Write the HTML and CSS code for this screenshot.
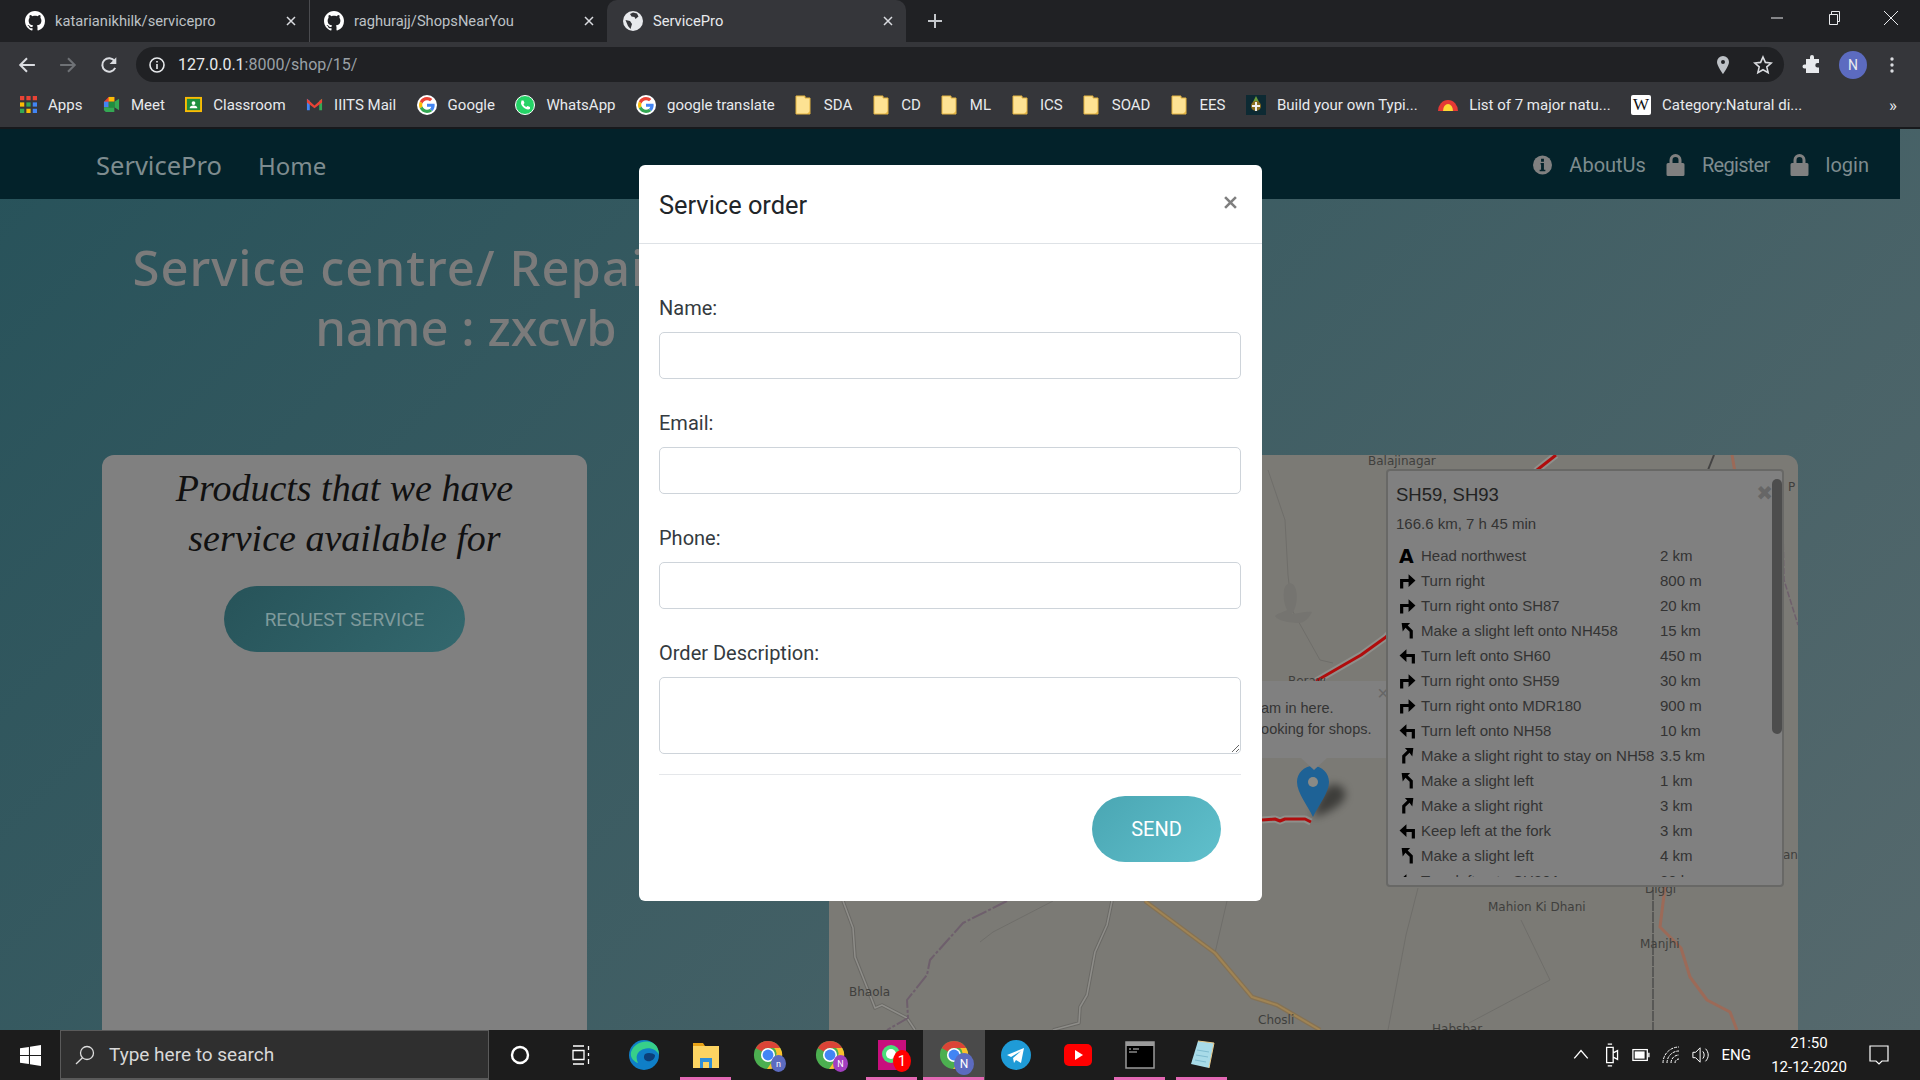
FILE: index.html
```html
<!DOCTYPE html>
<html lang="en">
<head>
<meta charset="utf-8">
<title>ServicePro</title>
<link rel="stylesheet" href="styles.css">
</head>
<body>
<svg class="defs" width="0" height="0" aria-hidden="true">
  <symbol id="gh" viewBox="0 0 16 16"><path fill="#fff" d="M8 0C3.58 0 0 3.58 0 8c0 3.54 2.29 6.53 5.47 7.59.4.07.55-.17.55-.38 0-.19-.01-.82-.01-1.49-2.01.37-2.53-.49-2.69-.94-.09-.23-.48-.94-.82-1.13-.28-.15-.68-.52-.01-.53.63-.01 1.08.58 1.23.82.72 1.21 1.87.87 2.33.66.07-.52.28-.87.51-1.07-1.78-.2-3.64-.89-3.64-3.95 0-.87.31-1.59.82-2.15-.08-.2-.36-1.02.08-2.12 0 0 .67-.21 2.2.82.64-.18 1.32-.27 2-.27.68 0 1.36.09 2 .27 1.53-1.04 2.2-.82 2.2-.82.44 1.1.16 1.92.08 2.12.51.56.82 1.27.82 2.15 0 3.07-1.87 3.75-3.65 3.95.29.25.54.73.54 1.48 0 1.07-.01 1.93-.01 2.2 0 .21.15.46.55.38A8.013 8.013 0 0016 8c0-4.42-3.58-8-8-8z"/></symbol>
  <symbol id="x" viewBox="0 0 10 10"><path d="M1 1l8 8M9 1L1 9" fill="none" stroke="currentColor" stroke-width="1.5"/></symbol>
  <symbol id="g" viewBox="-6 -6 60 60"><circle cx="24" cy="24" r="30" fill="#fff"/><path fill="#EA4335" d="M24 9.5c3.54 0 6.71 1.22 9.21 3.6l6.85-6.85C35.9 2.38 30.47 0 24 0 14.62 0 6.51 5.38 2.56 13.22l7.98 6.19C12.43 13.72 17.74 9.5 24 9.5z"/><path fill="#4285F4" d="M46.98 24.55c0-1.57-.15-3.09-.38-4.55H24v9.02h12.94c-.58 2.96-2.26 5.48-4.78 7.18l7.73 6c4.51-4.18 7.09-10.36 7.09-17.65z"/><path fill="#FBBC05" d="M10.53 28.59c-.48-1.45-.76-2.99-.76-4.59s.27-3.14.76-4.59l-7.98-6.19C.92 16.46 0 20.12 0 24c0 3.88.92 7.54 2.56 10.78l7.97-6.19z"/><path fill="#34A853" d="M24 48c6.48 0 11.93-2.13 15.89-5.81l-7.73-6c-2.15 1.45-4.92 2.3-8.16 2.3-6.26 0-11.57-4.22-13.47-9.91l-7.98 6.19C6.51 42.62 14.62 48 24 48z"/></symbol>
  <symbol id="folder" viewBox="0 0 16 20"><path fill="#fde293" stroke="#e3b341" d="M1 1h9v2h5v16H1z"/><path fill="#e3b341" d="M12 19l3-3v3z"/></symbol>
  <symbol id="chrome" viewBox="0 0 32 32"><circle cx="16" cy="16" r="15" fill="#4caf50"/><path fill="#db4437" d="M3 8.5A15 15 0 0 1 29 8.5H16a7.500 7.500 0 0 0-6.500 3.800z"/><path fill="#fbc02d" d="M29 8.500A15 15 0 0 1 15 31l7.500-11a7.500 7.500 0 0 0 0-11.500z"/><circle cx="16" cy="16" r="7.500" fill="#fff"/><circle cx="16" cy="16" r="5.800" fill="#4285f4"/></symbol>
  <symbol id="tr" viewBox="0 0 16 16"><path d="M1 15.500V6.500h8V2l6.500 6L9 14V9.500H4v6z"/></symbol>
  <symbol id="tl" viewBox="0 0 16 16"><path d="M15 15.500V6.500H7V2L.5 8 7 14V9.500h5v6z"/></symbol>
  <symbol id="sl" viewBox="0 0 16 16"><path d="M2.500 1h8L8.200 3.300 13 8v7.500h-3V9.200L6.100 5.400 3.500 9z"/></symbol>
  <symbol id="sr" viewBox="0 0 16 16"><path d="M13.500 1h-8l2.300 2.300L3 8v7.500h3V9.200l3.900-3.800L12.500 9z"/></symbol>
  <symbol id="lock" viewBox="0 0 18 22"><path fill="#808080" d="M1.500 9H3V6a6 6 0 0 1 12 0v3h1.500A1.500 1.500 0 0 1 18 10.500v10a1.500 1.500 0 0 1-1.500 1.500h-15A1.500 1.500 0 0 1 0 20.500v-10A1.500 1.500 0 0 1 1.500 9zM6 9h6V6a3 3 0 0 0-6 0z"/></symbol>
</svg>

<div class="tabbar">
  <div class="tab"><svg class="fav"><use href="#gh"/></svg><span class="tab-title">katarianikhilk/servicepro</span><svg class="tab-x"><use href="#x"/></svg></div>
  <div class="tab tab-sep"><svg class="fav"><use href="#gh"/></svg><span class="tab-title">raghurajj/ShopsNearYou</span><svg class="tab-x"><use href="#x"/></svg></div>
  <div class="tab tab-active"><svg class="fav" viewBox="0 0 20 20"><circle cx="10" cy="10" r="10" fill="#e8eaed"/><path fill="#35363a" d="M10 1.500l4 1 1.500 3-3 2.500-1-2-3-.5L7 3zM2.500 9l4.500 1 2 3-1.500 5L5 15z"/></svg><span class="tab-title">ServicePro</span><svg class="tab-x"><use href="#x"/></svg></div>
  <svg class="newtab" viewBox="0 0 14 14"><path d="M7 0v14M0 7h14" stroke="#c4c7cb" stroke-width="2"/></svg>
  <div class="winctl">
    <svg viewBox="0 0 14 14"><path d="M1 7h12" stroke="#e8eaed"/></svg>
    <svg viewBox="0 0 14 14"><path d="M2.500 3.500h8v10h-8zM4.500 3.500V.5h8v10h-2" fill="none" stroke="#e8eaed"/></svg>
    <svg viewBox="0 0 14 14"><path d="M0 0l14 14M14 0L0 14" stroke="#e8eaed"/></svg>
  </div>
</div>

<div class="toolbar">
  <svg class="tb-ic" viewBox="0 0 16 16"><path d="M15 8H2M8 2L2 8l6 6" fill="none" stroke="#dadce0" stroke-width="1.800"/></svg>
  <svg class="tb-ic" viewBox="0 0 16 16"><path d="M1 8h13M8 2l6 6-6 6" fill="none" stroke="#6f7276" stroke-width="1.800"/></svg>
  <svg class="tb-ic" viewBox="0 0 16 16"><path d="M13.500 10.500A6 6 0 1 1 13 4.500" fill="none" stroke="#dadce0" stroke-width="1.800"/><path d="M14.500 1v6h-6z" fill="#dadce0"/></svg>
  <div class="omnibox">
    <svg class="omni-info" viewBox="0 0 16 16"><circle cx="8" cy="8" r="7" fill="none" stroke="#e8eaed" stroke-width="1.600"/><path d="M7.200 7h1.600v5H7.200zM7.200 4h1.600v1.600H7.200z" fill="#e8eaed"/></svg>
    <span class="url"><b>127.0.0.1</b>:8000/shop/15/</span>
    <svg class="omni-pin" viewBox="0 0 12 18"><path d="M6 0a6 6 0 0 0-6 6c0 4 6 12 6 12s6-8 6-12a6 6 0 0 0-6-6zm0 8a2 2 0 1 1 0-4 2 2 0 0 1 0 4z" fill="#bdc1c6"/></svg>
    <svg class="omni-star" viewBox="0 0 20 20"><path d="M10 2l2.400 5.400 5.800.6-4.400 3.900 1.300 5.800L10 14.700 4.900 17.700l1.300-5.800L1.800 8l5.800-.6z" fill="none" stroke="#dadce0" stroke-width="1.600"/></svg>
  </div>
  <svg class="puzzle" viewBox="0 0 20 20"><path fill="#e8eaed" d="M8 2a2 2 0 0 1 4 0v2h5v4h-1.500a2.200 2.200 0 0 0 0 4.400H17V18H4v-4.500H2.500a2 2 0 0 1 0-4H4V4h4z"/></svg>
  <div class="avatar">N</div>
  <svg class="dots" viewBox="0 0 4 16"><circle cx="2" cy="2" r="1.700" fill="#dadce0"/><circle cx="2" cy="8" r="1.700" fill="#dadce0"/><circle cx="2" cy="14" r="1.700" fill="#dadce0"/></svg>
</div>

<div class="bookmarks">
  <a class="bm"><svg class="bm-ic" viewBox="0 0 16 16"><rect width="4" height="4" fill="#ea4335"/><rect x="6" width="4" height="4" fill="#ea4335"/><rect x="12" width="4" height="4" fill="#ea4335"/><rect y="6" width="4" height="4" fill="#fbbc05"/><rect x="6" y="6" width="4" height="4" fill="#34a853"/><rect x="12" y="6" width="4" height="4" fill="#4285f4"/><rect y="12" width="4" height="4" fill="#34a853"/><rect x="6" y="12" width="4" height="4" fill="#fbbc05"/><rect x="12" y="12" width="4" height="4" fill="#4285f4"/></svg>Apps</a>
  <a class="bm"><svg class="bm-ic" viewBox="0 0 18 18"><path d="M1 6l5-5h6v5H6v6H1z" fill="#ea4335"/><path d="M1 6h5v6H1z" fill="#4285f4"/><path d="M6 12h6v5H3l-2-2v-3z" fill="#34a853"/><path d="M6 1h6v5H6z" fill="#fbbc05"/><path d="M12 6v6l5 3V3z" fill="#34a853"/><path d="M6 6h6v6H6z" fill="#1e8e3e"/></svg>Meet</a>
  <a class="bm"><svg class="bm-ic" viewBox="0 0 18 18"><rect x="0" y="1" width="18" height="16" fill="#fbbc04"/><rect x="2" y="3" width="14" height="12" fill="#1e8e3e"/><circle cx="9" cy="7.500" r="2" fill="#fff"/><path d="M5 13a4 3 0 0 1 8 0z" fill="#fff"/></svg>Classroom</a>
  <a class="bm"><svg class="bm-ic" viewBox="0 0 18 18"><path d="M1 3l3 2v10H1z" fill="#4285f4"/><path d="M17 3l-3 2v10h3z" fill="#34a853"/><path d="M1 3l8 7 8-7v4l-8 6-8-6z" fill="#ea4335"/></svg>IIITS Mail</a>
  <a class="bm"><svg class="bm-ic bm-lg"><use href="#g"/></svg>Google</a>
  <a class="bm"><svg class="bm-ic bm-lg" viewBox="0 0 20 20"><circle cx="10" cy="10" r="9.500" fill="#25d366" stroke="#fff"/><path d="M6.500 5.500l2 0 1 2.500-1 1.200c.6 1.300 1.500 2.200 2.800 2.800l1.200-1 2.500 1v1.800c-1 1.200-3 1-5-.3-2-1.300-3.500-3-4-5 0-1.200.5-2.300.5-3z" fill="#fff"/></svg>WhatsApp</a>
  <a class="bm"><svg class="bm-ic bm-lg"><use href="#g"/></svg>google translate</a>
  <a class="bm"><svg class="bm-fold"><use href="#folder"/></svg>SDA</a>
  <a class="bm"><svg class="bm-fold"><use href="#folder"/></svg>CD</a>
  <a class="bm"><svg class="bm-fold"><use href="#folder"/></svg>ML</a>
  <a class="bm"><svg class="bm-fold"><use href="#folder"/></svg>ICS</a>
  <a class="bm"><svg class="bm-fold"><use href="#folder"/></svg>SOAD</a>
  <a class="bm"><svg class="bm-fold"><use href="#folder"/></svg>EES</a>
  <a class="bm"><svg class="bm-ic bm-lg" viewBox="0 0 20 20"><rect width="20" height="20" fill="#0d2a33"/><path d="M10 1l3 6H7z" fill="#6a9a3a"/><circle cx="10" cy="11" r="5" fill="#8a6d1e"/><path d="M9 7h2v9H9zM6 10h8v2H6z" fill="#f0f0f0"/></svg>Build your own Typi...</a>
  <a class="bm"><svg class="bm-ic bm-lg" viewBox="0 0 20 20"><path d="M0 16a10 11 0 0 1 20 0z" fill="#e53935"/><path d="M5 16a5 7 0 0 1 10 0z" fill="#fdd835"/></svg>List of 7 major natu...</a>
  <a class="bm"><span class="bm-w">W</span>Category:Natural di...</a>
  <span class="bm-more">»</span>
</div>

<main class="page">
  <nav class="nav">
    <span class="brand">ServicePro</span>
    <a class="nav-home">Home</a>
    <div class="nav-right">
      <svg class="nav-ic" viewBox="0 0 20 20"><circle cx="10" cy="10" r="10" fill="#808080"/><path d="M8 8h3.500v7H13v1.500H7V15h1.500v-5.500H8zM8.500 3.500h3v3h-3z" fill="#03222a"/></svg><a class="nav-link">AboutUs</a>
      <svg class="nav-ic"><use href="#lock"/></svg><a class="nav-link nav-link-tight">Register</a>
      <svg class="nav-ic"><use href="#lock"/></svg><a class="nav-link">login</a>
    </div>
  </nav>

  <h1 class="hero"><span class="hero-line">Service centre/ Repair shop</span><br>name : zxcvb</h1>

  <section class="content">
    <div class="card">
      <h2 class="card-title">Products that we have service available for</h2>
      <a class="pill pill-req">REQUEST SERVICE</a>
    </div>

    <div class="map">
      <svg class="map-svg" viewBox="829 455 969 620">
        <g fill="none" stroke-linejoin="round">
          <path d="M843 901L853 928 855 957 870 995 875 1008 882 1005 907 1018 915 1030" stroke="#6a6965" stroke-width="3.500"/>
          <path d="M843 901L853 928 855 957 870 995 875 1008 882 1005 907 1018 915 1030" stroke="#8e8d89" stroke-width="1.500"/>
          <path d="M1112 901L1107 925 1095 952 1087 995 1080 1007 1079 1023 1053 1030" stroke="#6a6965" stroke-width="3.500"/>
          <path d="M1112 901L1107 925 1095 952 1087 995 1080 1007 1079 1023 1053 1030" stroke="#8e8d89" stroke-width="1.500"/>
          <path d="M1007 901L963 923 930 960 927 975 907 1000 908 1018 887 1030" stroke="#6e5f6c" stroke-width="2" stroke-dasharray="16 2 3 2"/>
          <path d="M1053 901L993 932 980 942M1227 901L1215 953M1418 888L1406 935 1388 1030M1521 920L1550 980 1469 1023" stroke="#6f6e6a" stroke-width="1"/>
          <path d="M1145 901L1215 953 1252 997 1277 1005 1320 1030" stroke="#857254" stroke-width="4.500"/>
          <path d="M1145 901L1215 953 1252 997 1277 1005 1320 1030" stroke="#a08454" stroke-width="2"/>
          <path d="M1665 887L1660 927 1681 948 1690 977 1707 1000 1730 1012 1737 1030" stroke="#9c6a58" stroke-width="3"/>
          <path d="M1653 890L1653 1030" stroke="#4e4e4c" stroke-width="1.500" stroke-dasharray="10 1"/>
          <path d="M1268 470L1285 520 1288 575 1292 610 1320 660 1333 663" stroke="#6f6e6a" stroke-width="1"/>
          <path d="M1782 480L1784 580 1798 625" stroke="#6e5f6c" stroke-width="1.500" stroke-dasharray="6 2"/>
          <path d="M1316 681L1361 655 1386 637 1430 590 1537 470 1556 455M1262 820L1275 819 1280 821 1285 819 1305 819 1311 822" stroke="#8f8f8b" stroke-width="7"/>
          <path d="M1316 681L1361 655 1386 637 1430 590 1537 470 1556 455M1262 820L1275 819 1280 821 1285 819 1305 819 1311 822" stroke="#b00c0c" stroke-width="3"/>
          <path d="M1714 455L1708 470" stroke="#444" stroke-width="2"/>
          <path d="M1732 455L1735 472" stroke="#9c6a58" stroke-width="3"/>
        </g>
        <path d="M1284 590c2-9 10-9 12 0s0 18-4 24c6 0 14-3 20-2-3 6-8 12-16 11s-18-2-21-7c3-3 9-4 12-6-3-6-4-13-3-20z" fill="#757470"/>
        <g class="map-label">
          <text x="1368" y="465">Balajinagar</text>
          <text x="1288" y="685">Beraw</text>
          <text x="1788" y="491">P</text>
          <text x="1783" y="859">an</text>
          <text x="1488" y="911">Mahion Ki Dhani</text>
          <text x="1640" y="948">Manjhi</text>
          <text x="1645" y="893">Diggi</text>
          <text x="849" y="996">Bhaola</text>
          <text x="1258" y="1024">Chosli</text>
          <text x="1432" y="1033">Habsbar</text>
        </g>
        <path class="pin-shadow" d="M1313 817c10-2 28-10 32-20 2-8-6-14-14-12-8 3-14 16-18 32z"/>
        <path d="M1313 817c-5-11-16-24-16-35 0-9 7-16 16-16s16 7 16 16c0 11-11 24-16 35z" fill="#1e6296"/>
        <circle cx="1313" cy="782" r="5" fill="#8a8a86"/>
        <path d="M1301 758h26l-13 12z" fill="#808080"/>
      </svg>
      <div class="popup">
        <span class="popup-x">×</span>
        <p>I am in here.</p>
        <p>Looking for shops.</p>
      </div>
      <aside class="panel">
        <div class="panel-scroll">
          <h3 class="panel-title">SH59, SH93</h3>
          <p class="panel-sum">166.6 km, 7 h 45 min</p>
          <div class="steps">
            <div class="step"><b class="step-a">A</b><span>Head northwest</span><span>2 km</span></div>
            <div class="step"><svg class="step-ic"><use href="#tr"/></svg><span>Turn right</span><span>800 m</span></div>
            <div class="step"><svg class="step-ic"><use href="#tr"/></svg><span>Turn right onto SH87</span><span>20 km</span></div>
            <div class="step"><svg class="step-ic"><use href="#sl"/></svg><span>Make a slight left onto NH458</span><span>15 km</span></div>
            <div class="step"><svg class="step-ic"><use href="#tl"/></svg><span>Turn left onto SH60</span><span>450 m</span></div>
            <div class="step"><svg class="step-ic"><use href="#tr"/></svg><span>Turn right onto SH59</span><span>30 km</span></div>
            <div class="step"><svg class="step-ic"><use href="#tr"/></svg><span>Turn right onto MDR180</span><span>900 m</span></div>
            <div class="step"><svg class="step-ic"><use href="#tl"/></svg><span>Turn left onto NH58</span><span>10 km</span></div>
            <div class="step"><svg class="step-ic"><use href="#sr"/></svg><span>Make a slight right to stay on NH58</span><span>3.5 km</span></div>
            <div class="step"><svg class="step-ic"><use href="#sl"/></svg><span>Make a slight left</span><span>1 km</span></div>
            <div class="step"><svg class="step-ic"><use href="#sr"/></svg><span>Make a slight right</span><span>3 km</span></div>
            <div class="step"><svg class="step-ic"><use href="#tl"/></svg><span>Keep left at the fork</span><span>3 km</span></div>
            <div class="step"><svg class="step-ic"><use href="#sl"/></svg><span>Make a slight left</span><span>4 km</span></div>
            <div class="step"><svg class="step-ic"><use href="#tl"/></svg><span>Turn left onto SH30A</span><span>20 km</span></div>
          </div>
        </div>
        <span class="panel-x">✖</span>
        <span class="panel-thumb"></span>
      </aside>
    </div>
  </section>

  <div class="backdrop">
    <form class="modal">
      <header class="modal-head">
        <h2 class="modal-title">Service order</h2>
        <svg class="modal-x" viewBox="0 0 12 12"><path d="M1 1l10 10M11 1L1 11" stroke="#7f7f7f" stroke-width="2.400"/></svg>
      </header>
      <div class="modal-body">
        <label class="field"><span class="field-label">Name:</span><input class="control" type="text"></label>
        <label class="field"><span class="field-label">Email:</span><input class="control" type="text"></label>
        <label class="field"><span class="field-label">Phone:</span><input class="control" type="text"></label>
        <label class="field"><span class="field-label">Order Description:</span><textarea class="control control-area"></textarea></label>
      </div>
      <footer class="modal-foot"><a class="pill pill-send">SEND</a></footer>
    </form>
  </div>
</main>

<footer class="taskbar">
  <div class="tk-start"><svg viewBox="0 0 20 20"><path fill="#fff" d="M0 3l8.500-1.200v7.700H0zM9.500 1.600L20 0v9.500H9.500zM0 10.500h8.500v7.700L0 17zM9.500 10.500H20V20L9.500 18.400z"/></svg></div>
  <div class="tk-search"><svg viewBox="0 0 20 20"><circle cx="12" cy="8" r="6.500" fill="none" stroke="#ddd" stroke-width="1.300"/><path d="M7.500 12.800L1 19" stroke="#ddd" stroke-width="1.300"/></svg><span>Type here to search</span></div>
  <div class="tk-cell"><svg class="tk-sm" viewBox="0 0 20 20"><circle cx="10" cy="10" r="8" fill="none" stroke="#fff" stroke-width="2.400"/></svg></div>
  <div class="tk-cell"><svg class="tk-sm" viewBox="0 0 20 20"><path d="M1 1h11M1 19h11M1 5.500h11v9H1zM16.500 1v4M16.500 8v3M16.500 14v5" fill="none" stroke="#fff" stroke-width="1.300"/></svg></div>
  <div class="tk-cell"><svg class="tk-app" viewBox="0 0 30 30"><circle cx="15" cy="15" r="15" fill="#0f7fc7"/><path d="M2 12C5 3 16-1 24 3c5 3 6 8 6 12-2-5-9-8-15-6C8 11 6 17 9 23 4 21 1 17 2 12z" fill="#37cf8a"/><path d="M16 14c3-2 8-1 10 1 0 5-5 7-8 6s-4-4-2-7z" fill="#0c3f78"/></svg></div>
  <div class="tk-cell tk-open"><svg class="tk-app" viewBox="0 0 30 30"><path d="M2 3h10l2 3H2z" fill="#e8a317"/><path d="M2 6h26v22H2z" fill="#fcd462"/><path d="M9 18h12v10h-3v-6h-6v6H9z" fill="#2f8fd8"/></svg></div>
  <div class="tk-cell"><span class="tk-chrome"><svg class="tk-app"><use href="#chrome"/></svg><i class="tk-badge tk-b1">n</i></span></div>
  <div class="tk-cell"><span class="tk-chrome"><svg class="tk-app"><use href="#chrome"/></svg><i class="tk-badge tk-b2">N</i></span></div>
  <div class="tk-cell tk-open"><span class="tk-chrome"><svg class="tk-app" viewBox="0 0 30 30"><rect x="1" y="0" width="28" height="30" fill="#c80f7d"/><circle cx="14" cy="14" r="9" fill="#4be07a"/><circle cx="14" cy="14" r="5" fill="#fff"/></svg><i class="tk-count">1</i></span></div>
  <div class="tk-cell tk-open tk-active"><span class="tk-chrome"><svg class="tk-app"><use href="#chrome"/></svg><i class="tk-badge tk-b1 tk-big">N</i></span></div>
  <div class="tk-cell"><svg class="tk-app" viewBox="0 0 30 30"><circle cx="15" cy="15" r="15" fill="#1f9bd7"/><path d="M6 15L23 8l-3 15-5-3-2 3-1-5 8-7-10 6z" fill="#fff"/></svg></div>
  <div class="tk-cell"><svg class="tk-app" viewBox="0 0 30 30"><rect x="1" y="4" width="28" height="22" rx="5" fill="#f00"/><path d="M12 10l8 5-8 5z" fill="#fff"/></svg></div>
  <div class="tk-cell tk-open"><svg class="tk-app" viewBox="0 0 30 30"><rect x="1" y="2" width="28" height="26" fill="#000" stroke="#9a9a9a" stroke-width="1.500"/><rect x="1" y="2" width="28" height="4" fill="#9a9a9a"/><path d="M4 9h2M8 9h6M4 12h8" stroke="#ccc"/></svg></div>
  <div class="tk-cell tk-open"><svg class="tk-app" viewBox="0 0 30 30"><path d="M11 1l16 2-5 25-18-4z" fill="#a8dbe8"/><path d="M11 1l16 2-5 25" fill="none" stroke="#e8c98a" stroke-width="1"/><path d="M10 10l12 2M9 15l12 2M8 20l11 2" stroke="#7fbcd0"/></svg></div>
  <div class="tray">
    <svg viewBox="0 0 16 16" class="tray-ic"><path d="M2 11l6-7 6 7" fill="none" stroke="#fff" stroke-width="1.200"/></svg>
    <svg viewBox="0 0 16 22" class="tray-ic tray-tall"><path d="M4 4h6v14H4zM10 9l4-2v8l-4-2M5 1h4M5 21h4" fill="none" stroke="#fff" stroke-width="1.200"/></svg>
    <svg viewBox="0 0 20 14" class="tray-ic"><rect x="1" y="1" width="16" height="12" fill="none" stroke="#fff" stroke-width="1.400"/><rect x="3" y="3" width="11" height="8" fill="#fff"/><rect x="18" y="4.500" width="1.500" height="5" fill="#fff"/></svg>
    <svg viewBox="0 0 18 18" class="tray-ic"><path d="M1 17A16 16 0 0 1 17 1M5 17A12 12 0 0 1 17 5M9 17a8 8 0 0 1 8-8M13 17a4 4 0 0 1 4-4" fill="none" stroke="#fff" stroke-dasharray="3 1"/></svg>
    <svg viewBox="0 0 20 20" class="tray-ic"><path d="M1 7h3l5-5v16l-5-5H1zM12 6c2 2 2 6 0 8M15 3c4 4 4 10 0 14" fill="none" stroke="#fff" stroke-width="1.100"/></svg>
    <span class="tray-lang">ENG</span>
    <div class="clock"><span>21:50</span><span>12-12-2020</span></div>
    <svg viewBox="0 0 20 20" class="tray-note"><path d="M1 1h18v15h-6l-3 3-3-3H1z" fill="none" stroke="#fff" stroke-width="1.200"/></svg>
  </div>
</footer>
</body>
</html>
```
FILE: styles.css
```css
* { box-sizing: border-box; }
html, body { margin: 0; height: 100%; }
body {
  width: 1920px; height: 1080px; overflow: hidden;
  display: flex; flex-direction: column;
  background: #202124;
  font-family: Roboto, "Liberation Sans", sans-serif;
}
.defs { position: absolute; }
a { color: inherit; text-decoration: none; }
h1, h2, h3, p { margin: 0; font-weight: 400; }

/* browser tabs */
.tabbar { height: 42px; flex: none; display: flex; align-items: center; padding-left: 11px; background: #202124; color: #bdc1c6; font-size: 14.7px; }
.tab { width: 298px; height: 42px; display: flex; align-items: center; padding: 0 13px 0 14px; position: relative; }
.tab-sep { border-left: 1px solid #4a4b4f; }
.tab-active { background: #35363a; border-radius: 10px 10px 0 0; color: #e8eaed; width: 299px; padding-left: 16px; }
.fav { width: 20px; height: 20px; flex: none; margin-right: 10px; }
.tab-title { flex: 1; white-space: nowrap; }
.tab-x { width: 10px; height: 10px; flex: none; color: #dadce0; }
.newtab { width: 14px; height: 14px; margin-left: 22px; }
.winctl { margin-left: auto; display: flex; gap: 43px; padding-right: 22px; margin-top: -6px; }
.winctl svg { width: 14px; height: 14px; }

/* browser toolbar */
.toolbar { height: 42px; flex: none; background: #35363a; display: flex; align-items: center; padding: 3px 0 0 18px; }
.tb-ic { width: 18px; height: 18px; margin-right: 23px; flex: none; }
.toolbar .tb-ic:nth-child(3) { margin-right: 18px; }
.omnibox { width: 1648px; height: 35px; align-self: flex-start; margin-top: 2px; border-radius: 18px; background: #202124; display: flex; align-items: center; padding: 0 11px 0 13px; }
.omni-info { width: 16px; height: 16px; margin-right: 13px; }
.url { flex: 1; color: #9aa0a6; font-size: 16px; }
.url b { color: #e8eaed; font-weight: 400; }
.omni-pin { width: 12px; height: 18px; margin-right: 24px; }
.omni-star { width: 20px; height: 20px; }
.puzzle { width: 20px; height: 20px; margin-left: 18px; }
.avatar { width: 28px; height: 28px; margin-left: 17px; border-radius: 50%; background: #5c6bc0; color: #e8eaed; font-size: 14px; display: flex; align-items: center; justify-content: center; }
.dots { width: 4px; height: 16px; margin-left: 23px; }

/* bookmarks */
.bookmarks { height: 45px; flex: none; background: #35363a; border-bottom: 2px solid #17191c; display: flex; align-items: center; gap: 20.5px; padding: 0 0 2px 20px; color: #e8eaed; font-size: 15px; position: relative; }
.bm { display: flex; align-items: center; white-space: nowrap; gap: 11px; }
.bm-ic { width: 17px; height: 17px; flex: none; }
.bm-lg { width: 20px; height: 20px; }
.bm-fold { width: 16px; height: 20px; flex: none; margin-right: 1.500px; }
.bm-w { width: 20px; height: 20px; background: #fff; color: #111; border-radius: 2px; display: flex; align-items: center; justify-content: center; font: 17px "Liberation Serif", serif; }
.bm-more { margin-left: auto; padding-right: 23px; font-size: 17px; }

/* page */
.page { position: relative; flex: 1; min-height: 0; overflow: hidden; background: linear-gradient(135deg, #27525a, #56696d); }
.nav { width: 1900px; height: 70px; background: #03222a; display: flex; align-items: center; padding: 2px 31px 0 96px; color: #7e8c8f; font-family: "Noto Sans", sans-serif; font-size: 25.5px; }
.nav-home { margin-left: 36px; font-size: 24px; }
.nav-right { margin-left: auto; display: flex; align-items: center; font-family: Roboto, sans-serif; font-size: 20px; }
.nav-ic { width: 19px; height: 22px; flex: none; margin-left: 20px; margin-right: 17px; }
.nav-link-tight { letter-spacing: -.7px; }
.hero { width: 932px; margin-top: 38px; text-align: center; color: #7b7b7b; font-family: "Noto Sans", sans-serif; font-size: 49px; font-weight: 500; line-height: 60px; }
.hero-line { letter-spacing: 1px; }
.content { display: flex; gap: 242px; padding-left: 102px; margin-top: 98px; }
.card { width: 485px; height: 700px; flex: none; background: #808080; border-radius: 12px; padding-top: 8px; display: flex; flex-direction: column; align-items: center; }
.card-title { width: 360px; text-align: center; color: #111; font-family: "Liberation Serif", serif; font-style: italic; font-size: 38px; line-height: 50px; }
.pill { display: flex; align-items: center; justify-content: center; border-radius: 33px; font-size: 20px; }
.pill-req { width: 241px; height: 66px; margin-top: 23px; background: linear-gradient(135deg, #275359, #33686e); color: #7f9a9c; font-size: 19px; }

/* map */
.map { position: relative; width: 969px; height: 700px; flex: none; background: #7b7a75; border-radius: 12px; overflow: hidden; font-family: "Liberation Sans", sans-serif; }
.map-svg { display: block; width: 969px; height: 620px; }
.map-label { font: 12px "DejaVu Sans", sans-serif; fill: #3f3f3d; }
.pin-shadow { fill: #1d1d1b; opacity: .65; filter: blur(4px); }
.popup { position: absolute; left: 400px; top: 226px; width: 165px; height: 77px; background: #808080; color: #343434; font-size: 14.5px; padding-top: 17px; padding-left: 24px; }
.popup p { line-height: 21px; white-space: nowrap; }
.popup-x { position: absolute; right: 5px; top: 1px; color: #666; font-size: 20px; }
.panel { position: absolute; left: 557px; top: 14px; width: 398px; height: 418px; background: #808080; border: 2px solid #686866; border-radius: 4px; }
.panel-scroll { height: 406px; overflow: hidden; padding: 0 8px; color: #333; font-size: 15px; }
.panel-title { font-size: 18.5px; line-height: 22px; margin-top: 13px; color: #222; }
.panel-sum { margin-top: 9px; line-height: 18px; }
.steps { margin-top: 10px; }
.step { display: grid; grid-template-columns: 22px 239px auto; height: 25px; align-items: center; padding-left: 3px; white-space: nowrap; }
.step-a { font: bold 19px "DejaVu Sans", sans-serif; color: #000; }
.step-ic { width: 17px; height: 17px; fill: #000; }
.panel-x { position: absolute; top: 10px; right: 9px; color: #666; font-size: 20px; font-family: "DejaVu Sans", sans-serif; }
.panel-thumb { position: absolute; right: 0; top: 8px; width: 10px; height: 255px; background: #4d4d4d; border-radius: 5px; }

/* modal */
.backdrop { position: absolute; inset: 0; display: flex; justify-content: center; align-items: flex-start; padding: 36px 19px 0 0; }
.modal { width: 623px; height: 736px; background: #fff; border-radius: 6px; color: #212529; }
.modal-head { height: 79px; border-bottom: 1px solid #dee2e6; display: flex; justify-content: space-between; padding: 22px 25px 0 20px; }
.modal-title { font-size: 25.4px; line-height: 36px; }
.modal-x { width: 13px; height: 13px; margin-top: 9px; }
.modal-body { padding: 49px 21px 0 20px; display: flex; flex-direction: column; gap: 29px; }
.field { display: flex; flex-direction: column; gap: 9px; }
.field-label { font-size: 20px; line-height: 30px; color: #343a40; }
.control { display: block; width: 100%; height: 47px; border: 1px solid #ced4da; border-radius: 5px; background: #fff; margin: 0; padding: 0; }
.control-area { height: 77px; resize: vertical; }
.modal-foot { margin: 20px 21px 0 20px; padding: 21px 20px 0 0; border-top: 1px solid #e5e7ea; display: flex; justify-content: flex-end; }
.pill-send { width: 129px; height: 66px; background: linear-gradient(135deg, #4aa6b3, #60c0cc); color: #fff; }

/* taskbar */
.taskbar { height: 50px; flex: none; background: #1c1c1c; display: flex; align-items: stretch; color: #fff; }
.tk-start { width: 60px; display: flex; align-items: center; justify-content: center; }
.tk-start svg { width: 21px; height: 21px; }
.tk-search { width: 429px; background: #2f2f2f; border: 1px solid #5a5a5a; border-bottom-width: 2px; display: flex; align-items: center; padding-left: 14px; gap: 14px; color: #d8d8d8; font-size: 19px; }
.tk-search svg { width: 20px; height: 20px; }
.tk-cell { width: 62px; display: flex; align-items: center; justify-content: center; position: relative; }
.tk-sm { width: 20px; height: 20px; }
.tk-app { width: 30px; height: 30px; display: block; }
.tk-open::after { content: ""; position: absolute; left: 5px; right: 6px; bottom: 0; height: 3px; background: #e368b4; }
.tk-active { background: #4a4a4a; }
.tk-active::after { left: 0; right: 1px; }
.tk-chrome { position: relative; display: block; }
.tk-badge { position: absolute; right: -3px; bottom: -2px; width: 15px; height: 17px; border-radius: 50%; color: #fff; font: normal 9px Roboto, sans-serif; display: flex; align-items: center; justify-content: center; }
.tk-b1 { background: #5c6bc0; }
.tk-b2 { background: #a23fc0; }
.tk-big { width: 20px; height: 22px; font-size: 12px; right: -5px; bottom: -5px; }
.tk-count { position: absolute; right: -4px; bottom: -2px; width: 18px; height: 22px; border-radius: 50%; background: #f00; color: #fff; font: normal 15px Roboto, sans-serif; display: flex; align-items: center; justify-content: center; }
.tray { margin-left: auto; display: flex; align-items: center; padding-right: 31px; }
.tray-ic { width: 18px; height: 18px; margin-left: 12px; }
.tray-tall { height: 24px; }
.tray-lang { margin-left: 12px; font-size: 15px; }
.clock { width: 98px; display: flex; flex-direction: column; align-items: center; font-size: 15px; line-height: 24px; margin-left: 9px; }
.tray-note { width: 20px; height: 20px; margin-left: 11px; }
```
